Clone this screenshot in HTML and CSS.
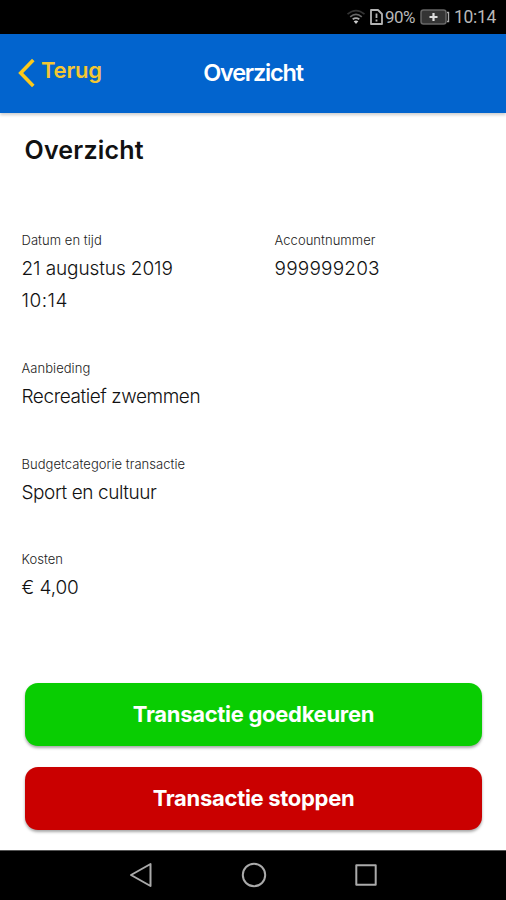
FILE: index.html
```html
<!DOCTYPE html>
<html lang="nl">
<head>
<meta charset="utf-8">
<title>Overzicht</title>
<link rel="stylesheet" href="styles.css">
</head>
<body>
<div class="status">
  <svg class="wifi" width="20" height="16" viewBox="0 0 20 16" fill="none" stroke-width="1.7">
    <path d="M1.5 5.2Q10-2 18.5 5.2" stroke="#333"/>
    <path d="M4.2 7.8Q10 3 15.8 7.8" stroke="#666"/>
    <path d="M6.7 10.3Q10 7.8 13.3 10.3" stroke="#aaa"/>
    <path d="M7.7 12.2Q10 10.8 12.3 12.2L10 15z" fill="#ccc"/>
  </svg>
  <svg class="sim" width="13" height="16" viewBox="0 0 13 16" fill="none" stroke="#b4b4b4" stroke-width="1.8">
    <path d="M1 1h7l4 4v10H1z" stroke-linejoin="round"/>
    <path d="M6.5 4.5v4.5M6.5 10.6v2" stroke-width="1.8"/>
  </svg>
  <span class="percent">90%</span>
  <svg class="battery" width="30" height="16" viewBox="0 0 30 16" fill="none">
    <rect x="1" y="1" width="25" height="14" rx="2.5" fill="#343434" stroke="#666" stroke-width="1.5"/>
    <path d="M27 3.5h1.5v9H27" stroke="#aaa" stroke-width="1.4"/>
    <path d="M13.5 4v8M9.5 8h8" stroke="#ddd" stroke-width="2.2"/>
  </svg>
  <span class="clock">10:14</span>
</div>
<header class="header">
  <div class="back">
    <svg width="18" height="30" viewBox="0 0 18 30" fill="none" stroke="#fcc91c" stroke-width="3.6"><path d="M16.3 2 3.7 15 16.3 28"/></svg>
    <span class="back-label">Terug</span>
  </div>
  <div class="title">Overzicht</div>
</header>
<main class="content">
  <h1 class="heading">Overzicht</h1>
  <dl class="details">
    <div class="field date"><dt>Datum en tijd</dt><dd>21 augustus 2019</dd><dd class="time">10:14</dd></div>
    <div class="field account"><dt>Accountnummer</dt><dd>999999203</dd></div>
    <div class="field offer"><dt>Aanbieding</dt><dd>Recreatief zwemmen</dd></div>
    <div class="field category"><dt>Budgetcategorie transactie</dt><dd>Sport en cultuur</dd></div>
    <div class="field cost"><dt>Kosten</dt><dd>€ 4,00</dd></div>
  </dl>
  <div class="actions">
    <button class="button approve">Transactie goedkeuren</button>
    <button class="button stop">Transactie stoppen</button>
  </div>
</main>
<nav class="navbar">
  <svg width="24" height="26" viewBox="0 0 24 26"><path d="M21.5 2v22L2 13z"/></svg>
  <svg width="26" height="26" viewBox="0 0 26 26"><circle cx="13" cy="13" r="11.2"/></svg>
  <svg width="24" height="26" viewBox="0 0 24 26"><rect x="2.3" y="3.3" width="19.4" height="19.4"/></svg>
</nav>
</body>
</html>
```
FILE: styles.css
```css
* { box-sizing: border-box; }
body {
  margin: 0;
  width: 506px;
  height: 900px;
  display: flex;
  flex-direction: column;
  overflow: hidden;
  background: #fff;
  color: #111;
  font-family: Inter, "Liberation Sans", sans-serif;
}
.status {
  height: 34px;
  flex: none;
  display: flex;
  align-items: center;
  justify-content: flex-end;
  padding-right: 10px;
  background: #000;
  color: #b8b8b8;
  font: 400 17.5px/35px Roboto, sans-serif;
}
.wifi { margin-right: 4px; }
.sim { margin-right: 2px; }
.percent { width: 31px; letter-spacing: -0.5px; font-size: 17px; }
.battery { margin: 0 4px; }
.clock { width: 42px; letter-spacing: -0.3px; }
.header {
  height: 79px;
  flex: none;
  display: grid;
  grid-template-columns: 1fr auto 1fr;
  align-items: center;
  padding: 0 17px;
  background: #0264ce;
  box-shadow: 0 2px 3px rgba(0, 0, 0, 0.2);
}
.back { display: flex; align-items: center; gap: 6px; padding-bottom: 2px; }
.back-label {
  color: #f4c732;
  font-size: 22px;
  font-weight: 600;
  line-height: 30px;
  letter-spacing: -0.2px;
  padding-bottom: 5px;
}
.title {
  color: #fff;
  font-size: 23.5px;
  font-weight: 600;
  line-height: 30px;
  letter-spacing: -1.2px;
  padding-bottom: 2px;
}
.content { flex: 1; display: flex; flex-direction: column; }
.heading { margin: 20px 0 0 24.5px; font-size: 25px; line-height: 34px; font-weight: 600; letter-spacing: 0.2px; }
.details {
  margin: 63px 0 0 21.5px;
  display: grid;
  grid-template-columns: 253px 1fr;
  grid-template-rows: 128px 96px 95px 95px;
}
.offer, .category, .cost { grid-column: 1 / -1; }
dt { padding-bottom: 3px; font-size: 13px; line-height: 20px; font-weight: 300; letter-spacing: 0.05px; color: #222; }
dd { margin: 0; font-size: 19px; line-height: 32px; font-weight: 300; letter-spacing: -0.1px; }
.date .time { letter-spacing: 0.5px; }
.account dd { letter-spacing: 0.2px; }
.offer dd, .category dd { letter-spacing: -0.43px; }
.actions { margin: 39px 24px 0 25px; display: flex; flex-direction: column; gap: 21px; }
.button {
  height: 63px;
  border: 0;
  border-radius: 13px;
  padding: 0 0 2px;
  color: #fff;
  font: 700 22px/30px Inter, sans-serif;
  letter-spacing: -0.3px;
  box-shadow: 0 2px 3px rgba(0, 0, 0, 0.35);
}
.approve { background: #09cd02; }
.stop { background: #ca0000; }
.navbar {
  height: 50px;
  flex: none;
  display: flex;
  justify-content: space-between;
  align-items: center;
  padding: 0 128px 2px 129px;
  border-top: 1px solid #555;
  background: #000;
}
.navbar svg { fill: none; stroke: #aaa; stroke-width: 2; stroke-linejoin: round; }
```
